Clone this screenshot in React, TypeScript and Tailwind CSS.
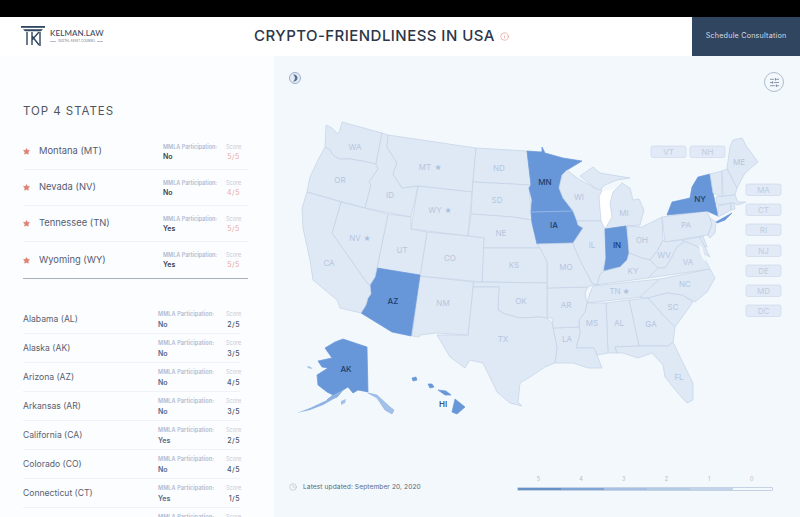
import { Clock, Info, SlidersHorizontal, Star } from 'lucide-react';

const topStates = [
  { name: 'Montana (MT)', mmla: 'No', score: '5/5' },
  { name: 'Nevada (NV)', mmla: 'No', score: '4/5' },
  { name: 'Tennessee (TN)', mmla: 'Yes', score: '5/5' },
  { name: 'Wyoming (WY)', mmla: 'Yes', score: '5/5' },
];

const otherStates = [
  { name: 'Alabama (AL)', mmla: 'No', score: '2/5' },
  { name: 'Alaska (AK)', mmla: 'No', score: '3/5' },
  { name: 'Arizona (AZ)', mmla: 'No', score: '4/5' },
  { name: 'Arkansas (AR)', mmla: 'No', score: '3/5' },
  { name: 'California (CA)', mmla: 'Yes', score: '2/5' },
  { name: 'Colorado (CO)', mmla: 'No', score: '4/5' },
  { name: 'Connecticut (CT)', mmla: 'Yes', score: '1/5' },
  { name: 'Delaware (DE)', mmla: 'Yes', score: '3/5' },
];

// page coordinates, the svg viewBox lines up with the screenshot
const states: { id: string; points: string; active?: boolean }[] = [
  { id: 'WA', points: '326,125 332,128 338,134 340,130 342,122 382,133 376,164 362,161 350,159 339,159 333,155 330,150 325,147' },
  { id: 'OR', points: '325,147 330,150 333,155 339,159 350,159 362,161 376,164 378,169 369,182 371,185 365,208 307,192 310,177 318,160' },
  { id: 'ID', points: '382,133 388,135 387,147 397,163 393,174 402,188 418,186 411,217 365,208 371,185 369,182 378,169 376,164' },
  { id: 'MT', points: '388,135 476,148 472,192 418,186 402,188 393,174 397,163 387,147' },
  { id: 'WY', points: '418,186 472,192 468,236 411,229' },
  { id: 'ND', points: '476,148 527,151 531,185 473,182' },
  { id: 'SD', points: '473,182 531,185 529,188 532,220 513,217 471,214' },
  { id: 'NE', points: '471,214 513,217 532,220 540,248 483,248 484,238 468,236' },
  { id: 'MN', active: true, points: '527,151 542,152 542,147 545,153 563,158 582,161 567,170 562,175 559,188 563,198 573,211 531,212 532,200 529,188 531,185' },
  { id: 'IA', active: true, points: '531,212 573,211 578,225 583,228 573,243 537,244 532,223' },
  { id: 'WI', points: '562,175 567,170 577,178 595,188 602,190 599,197 601,221 577,221 573,211 563,198 559,188' },
  { id: 'UP', points: '580,176 593,167 600,173 630,178 617,180 605,185 600,190 595,188' },
  { id: 'MI', points: '613,192 622,183 630,188 633,200 639,199 644,210 640,225 627,226 605,229 612,217 610,203' },
  { id: 'IL', points: '577,221 601,221 605,229 606,258 603,270 600,275 597,285 593,284 586,272 580,260 574,247 573,243 583,228 578,225' },
  { id: 'IN', active: true, points: '605,229 626,226 629,253 627,260 620,267 604,271 606,258' },
  { id: 'OH', points: '627,226 642,227 662,217 663,240 658,250 650,260 642,258 629,253' },
  { id: 'PA', points: '662,217 707,211 712,223 708,235 665,242' },
  { id: 'NY', active: true, points: '667,215 672,202 690,198 692,187 698,177 710,174 713,193 718,216 707,211' },
  { id: 'LI', active: true, points: '716,222 732,213 725,220 717,223' },
  { id: 'VT', points: '710,174 722,171 722,197 713,193' },
  { id: 'NH', points: '722,171 727,169 737,188 735,195 723,196' },
  { id: 'ME', points: '727,168 730,147 733,140 742,138 747,147 758,162 745,173 737,188' },
  { id: 'MA', points: '716,197 735,195 738,202 746,202 738,205 733,203 717,205' },
  { id: 'CT', points: '718,206 730,203 731,210 718,217' },
  { id: 'RI', points: '731,203 734,203 735,209 731,210' },
  { id: 'NJ', points: '710,218 716,222 715,233 710,238 708,235 712,225' },
  { id: 'MD', points: '682,240 700,237 705,247 710,257 703,253 698,247 687,242' },
  { id: 'DE', points: '700,237 703,236 707,247 705,247' },
  { id: 'WV', points: '663,240 665,242 682,240 684,242 677,247 672,257 665,268 658,268 650,260 658,250' },
  { id: 'VA', points: '648,278 658,268 665,268 672,257 677,247 684,242 687,242 698,247 703,253 707,263 710,269' },
  { id: 'KY', points: '594,285 597,285 600,275 604,271 620,267 627,260 629,253 642,258 650,260 658,268 648,278' },
  { id: 'TN', points: '593,286 660,279 655,283 642,297 587,303 590,293' },
  { id: 'NC', points: '660,279 710,269 715,278 707,292 695,302 682,295 667,293 648,298 640,297 655,283' },
  { id: 'SC', points: '648,298 667,293 682,295 693,302 675,327 663,315' },
  { id: 'GA', points: '629,300 648,298 663,315 675,327 673,342 668,346 639,346' },
  { id: 'AL', points: '606,303 629,300 639,346 615,347 617,353 608,353 607,327' },
  { id: 'MS', points: '587,303 606,303 607,327 608,353 597,355 594,348 576,348 580,333 579,320 585,312' },
  { id: 'LA', points: '553,328 579,327 580,333 576,348 594,348 597,355 602,368 588,368 573,363 555,363 557,347' },
  { id: 'AR', points: '547,288 588,287 585,293 587,303 585,312 579,320 579,327 553,328 552,318 547,318' },
  { id: 'MO', points: '537,244 573,243 574,247 580,260 586,272 593,285 588,287 547,288 547,262 540,248' },
  { id: 'KS', points: '483,248 540,248 547,262 547,283 482,282' },
  { id: 'OK', points: '473,282 482,282 547,283 547,318 540,317 520,318 505,314 498,310 499,287 473,287' },
  { id: 'TX', points: '473,287 499,287 498,310 505,314 520,318 540,317 547,318 552,323 553,328 557,347 555,363 545,367 530,377 520,383 518,402 522,406 510,403 497,392 483,363 470,360 465,368 450,357 437,335 468,335' },
  { id: 'NM', points: '420,276 473,282 473,287 468,335 437,333 420,335 419,337 412,336' },
  { id: 'CO', points: '427,232 468,236 484,238 482,282 420,276' },
  { id: 'UT', points: '388,214 411,217 411,229 427,232 420,276 377,268' },
  { id: 'AZ', active: true, points: '377,268 420,275 411,336 392,332 361,313 366,305 368,298 371,294 370,285 375,277' },
  { id: 'NV', points: '341,202 388,214 377,268 375,277 370,285 367,283 332,233' },
  { id: 'CA', points: '307,192 341,202 332,233 367,283 370,285 371,294 368,298 366,305 361,313 340,308 337,300 325,290 313,280 310,260 303,228 302,208' },
  { id: 'FL', points: '615,347 639,346 668,346 673,342 683,363 693,383 693,400 687,403 677,392 665,377 663,365 652,353 638,358 623,353 617,353' },
  { id: 'AK', active: true, points: '335,342 343,339 367,347 368,392 358,390 353,393 348,387 343,390 337,397 327,400 333,395 327,392 318,385 317,375 328,368 322,367 318,361 332,358 325,348' },
  { id: 'HI1', active: true, points: '455,399 465,407 457,414 452,412' },
  { id: 'HI2', active: true, points: '438,390 446,391 451,395 445,395' },
  { id: 'HI3', active: true, points: '428,384 432,384 434,387 430,388' },
  { id: 'HI4', active: true, points: '412,378 416,377 417,380 413,381' },
];

const labels = [
  ['WA', 355, 147], ['OR', 340, 180], ['ID', 390, 195], ['MT', 425, 167], ['WY', 435, 210], ['ND', 499, 168],
  ['SD', 497, 200], ['NE', 501, 233], ['KS', 514, 265], ['OK', 521, 301], ['TX', 503, 339], ['NM', 443, 303],
  ['CO', 450, 258], ['UT', 402, 250], ['NV', 355, 238], ['CA', 329, 263], ['WI', 579, 197], ['IL', 592, 245],
  ['MI', 624, 213], ['OH', 642, 240], ['PA', 686, 225], ['WV', 664, 255], ['VA', 688, 262], ['KY', 633, 271],
  ['MO', 566, 267], ['AR', 566, 305], ['LA', 567, 339], ['MS', 592, 323], ['AL', 619, 323], ['GA', 651, 324],
  ['SC', 673, 307], ['NC', 685, 284], ['TN', 615, 291], ['FL', 679, 377], ['ME', 739, 162],
] as const;

const activeLabels = [
  ['AZ', 393, 301], ['AK', 346, 369], ['HI', 443, 404], ['MN', 545, 182], ['IA', 554, 225], ['IN', 617, 245], ['NY', 700, 199],
] as const;

const mapStars = [[438, 167], [448, 210], [367, 238], [626, 291]];

const pills = [
  ['VT', 651, 146], ['NH', 690, 146], ['MA', 746, 184], ['CT', 746, 204], ['RI', 746, 224],
  ['NJ', 746, 245], ['DE', 746, 265], ['MD', 746, 285], ['DC', 746, 305],
] as const;

const legend = ['5', '4', '3', '2', '1', '0'];

const Logo = () => (
  <div className="flex items-center gap-[5px] ml-[21px]">
    <svg width="24" height="21" viewBox="0 0 24 21" className="text-[#2f4560]">
      <rect x="0" y="0" width="24" height="1.8" fill="currentColor" />
      <path d="M2 3.2h20l-2 2H4z" fill="currentColor" />
      <g stroke="currentColor" fill="none" strokeWidth="1.4">
        <path d="M6 6v13M19 6v14" />
        <path d="M11 6v13M11 14l7-8M11 10l7 9" />
      </g>
    </svg>
    <div className="flex flex-col items-center">
      <span className="text-[8px] leading-[9px] font-medium text-[#3a4a60] tracking-[0.1px] font-[Lato,sans-serif]">KELMAN.LAW</span>
      <div className="flex items-center gap-[2px] mt-[1px]">
        <span className="w-[6px] h-px bg-[#b3bcc8]" />
        <span className="text-[3px] leading-[5px] text-[#6b778a] whitespace-nowrap">DIGITAL ASSET COUNSEL</span>
        <span className="w-[6px] h-px bg-[#b3bcc8]" />
      </div>
    </div>
  </div>
);

const Header = () => (
  <header className="h-[39px] flex items-center bg-white">
    <div className="w-[233px]">
      <Logo />
    </div>
    <div className="flex-1 flex items-center">
      <h1 className="ml-[21px] text-[15px] font-medium text-[#2b3648] tracking-[0.45px] whitespace-nowrap font-[Inter,sans-serif]">CRYPTO-FRIENDLINESS IN USA</h1>
      <Info className="ml-[5px] w-[9px] h-[9px] text-[#dd8b7c]" strokeWidth={1.5} />
    </div>
    <button className="w-[108px] h-full bg-[#2f4560] text-[#d5dce6] text-[7.2px] tracking-[0.2px]">Schedule Consultation</button>
  </header>
);

const Sidebar = () => (
  <aside className="w-[274px] h-full overflow-hidden bg-[#fbfdfe] shrink-0">
    <h2 className="ml-[23px] mt-[48px] h-[14px] leading-[14px] text-[11.5px] tracking-[0.95px] text-[#50555f]">TOP 4 STATES</h2>
    <div className="mx-[23px] w-[225px] mt-[16px] border-b border-[#a8afb8]">
      {topStates.map((s, i) => (
        <div key={s.name} className={`h-[36px] flex items-center ${i < 3 ? 'border-b border-[#eff3f7]' : ''}`}>
          <Star className="w-[7px] h-[7px] text-[#de8272] shrink-0" fill="currentColor" />
          <span className="ml-[9px] w-[124px] text-[9.4px] text-[#565c72] whitespace-nowrap">{s.name}</span>
          <div className="w-[63px] pt-[1px]">
            <div className="text-[5.5px] leading-[8px] font-semibold text-[#b0b9d2] whitespace-nowrap">MMLA Participation:</div>
            <div className="text-[7px] leading-[10px] mt-[1px] font-semibold text-[#3c4250]">{s.mmla}</div>
          </div>
          <div className="w-[15px] text-center pt-[1px]">
            <div className="text-[5.5px] leading-[8px] text-[#c6ccd8]">Score</div>
            <div className="text-[7px] leading-[10px] mt-[1px] text-[#e9aaa0] tracking-[0.5px]">{s.score}</div>
          </div>
        </div>
      ))}
    </div>
    <div className="mx-[23px] w-[217px] mt-[26px]">
      {otherStates.map((s) => (
        <div key={s.name} className="h-[29px] shrink-0 flex items-center border-b border-[#eff3f7]">
          <span className="w-[135px] text-[8.6px] text-[#5a6070] whitespace-nowrap">{s.name}</span>
          <div className="w-[68px] pt-[1px]">
            <div className="text-[5.5px] leading-[8px] font-semibold text-[#b0b9d2] whitespace-nowrap tracking-[0.1px]">MMLA Participation:</div>
            <div className="text-[7px] leading-[10px] mt-[2px] font-semibold text-[#56678c]">{s.mmla}</div>
          </div>
          <div className="w-[14px] text-right pt-[1px]">
            <div className="text-[5.5px] leading-[8px] text-[#c6ccd8]">Score</div>
            <div className="text-[7px] leading-[10px] mt-[2px] font-medium text-[#4d566a] tracking-[0.5px]">{s.score}</div>
          </div>
        </div>
      ))}
    </div>
  </aside>
);

const UsaMap = () => (
  <svg width="526" height="310" viewBox="274 110 526 310" className="shrink-0 font-[Inter,sans-serif]">
    {/* lake michigan shows lighter than the panel */}
    <polygon points="599,192 614,189 610,203 612,217 605,229 601,221" fill="#ffffff" />
    {states.map((s) => (
      <polygon
        key={s.id}
        points={s.points}
        fill={s.active ? '#6797d9' : '#dfe9f6'}
        stroke={s.active ? '#6797d9' : '#c3d1e5'}
        strokeWidth="0.7"
        strokeLinejoin="round"
      />
    ))}
    <line x1="531" y1="212" x2="573" y2="211" stroke="#a5c2ea" strokeWidth="0.7" />
    {/* alaska panhandle, tail and islands are washed out */}
    <polygon points="368,393 377,395 390,407 394,410 392,414 385,410 377,398" fill="#a3c0e8" stroke="#7ea6de" strokeWidth="0.5" />
    <polygon points="343,390 337,397 323,405 310,410 297,413 310,408 327,400 333,395" fill="#8fb2e4" />
    <polygon points="341,401 346,399 345,403 341,405" fill="#a3c0e8" />
    <polygon points="307,366 311,367 312,369 308,368" fill="#a3c0e8" />
    {/* chesapeake */}
    <polygon points="699,245 702,247 704,254 707,262 703,259 700,252" fill="#f3f8fc" />
    {labels.map(([t, x, y]) => (
      <text key={t} x={x} y={y + 3} textAnchor="middle" fontSize="8" fill="#b6c5dd">{t}</text>
    ))}
    {activeLabels.map(([t, x, y]) => (
      <text key={t} x={x} y={y + 3} textAnchor="middle" fontSize="8" fontWeight="500" fill="#1e3d6b">{t}</text>
    ))}
    {mapStars.map(([x, y]) => (
      <text key={x} x={x} y={y + 3} textAnchor="middle" fontSize="8" fill="#aebfda" fontFamily="DejaVu Sans">★</text>
    ))}
    {pills.map(([t, x, y]) => (
      <g key={t}>
        <rect x={x} y={y} width="35" height="11.5" rx="2" fill="#e1eaf6" stroke="#d0dcec" strokeWidth="0.8" />
        <text x={x + 17.5} y={y + 8.5} textAnchor="middle" fontSize="8" fill="#c0cde2">{t}</text>
      </g>
    ))}
  </svg>
);

const MapPanel = () => (
  <main className="flex-1 h-full flex flex-col bg-[#f3f8fc]">
    <div className="h-[54px] shrink-0 flex justify-between items-start pl-[15px] pr-[16px] pt-[16px]">
      <div className="w-[12px] h-[12px] rounded-full border border-[#9db0c9] bg-[#e3ebf4] flex items-center justify-center">
        <svg width="8" height="8" viewBox="0 0 8 8">
          <path d="M2 .8a3.4 3.4 0 1 1 0 6.4A3.6 3.6 0 0 0 2 .8z" fill="#5a7094" />
        </svg>
      </div>
      <div className="w-[20px] h-[20px] rounded-full border border-[#aebcd0] flex items-center justify-center">
        <SlidersHorizontal className="w-[11px] h-[11px] text-[#5d6f88]" strokeWidth={1.5} />
      </div>
    </div>
    <UsaMap />
    <div className="flex-1 flex items-start justify-between pl-[15px] pr-[27px] pt-[55px]">
      <div className="flex items-center gap-[6px] mt-[7px]">
        <Clock className="w-[8px] h-[8px] text-[#a5aebb]" strokeWidth={1.5} />
        <span className="text-[6.6px] leading-[10px] text-[#5e6675] tracking-[0.1px]">Latest updated: September 20, 2020</span>
      </div>
      <div className="w-[256px]">
        <div className="flex h-[8px]">
          {legend.map((l) => (
            <span key={l} className="w-[43px] text-center text-[5.5px] leading-[8px] text-[#b6bcc8]">{l}</span>
          ))}
        </div>
        <div className="flex h-[4px] mt-[4px] rounded-[1px] overflow-hidden border border-[#c5d2e3]">
          <div className="w-[43px] bg-[#6792c8]" />
          <div className="w-[43px] bg-[#7fa5d4]" />
          <div className="w-[43px] bg-[#a5c0e2]" />
          <div className="w-[43px] bg-[#b4cbe6]" />
          <div className="w-[43px] bg-[#c2d4ea]" />
          <div className="flex-1 bg-[#f3f8fc]" />
        </div>
      </div>
    </div>
  </main>
);

const App = () => {
  return (
    <div className="w-[800px] h-[517px] overflow-hidden flex flex-col font-[Inter,sans-serif]">
      <div className="h-[17px] bg-black shrink-0" />
      <Header />
      <div className="flex-1 min-h-0 flex">
        <Sidebar />
        <MapPanel />
      </div>
    </div>
  );
};

export default App;
